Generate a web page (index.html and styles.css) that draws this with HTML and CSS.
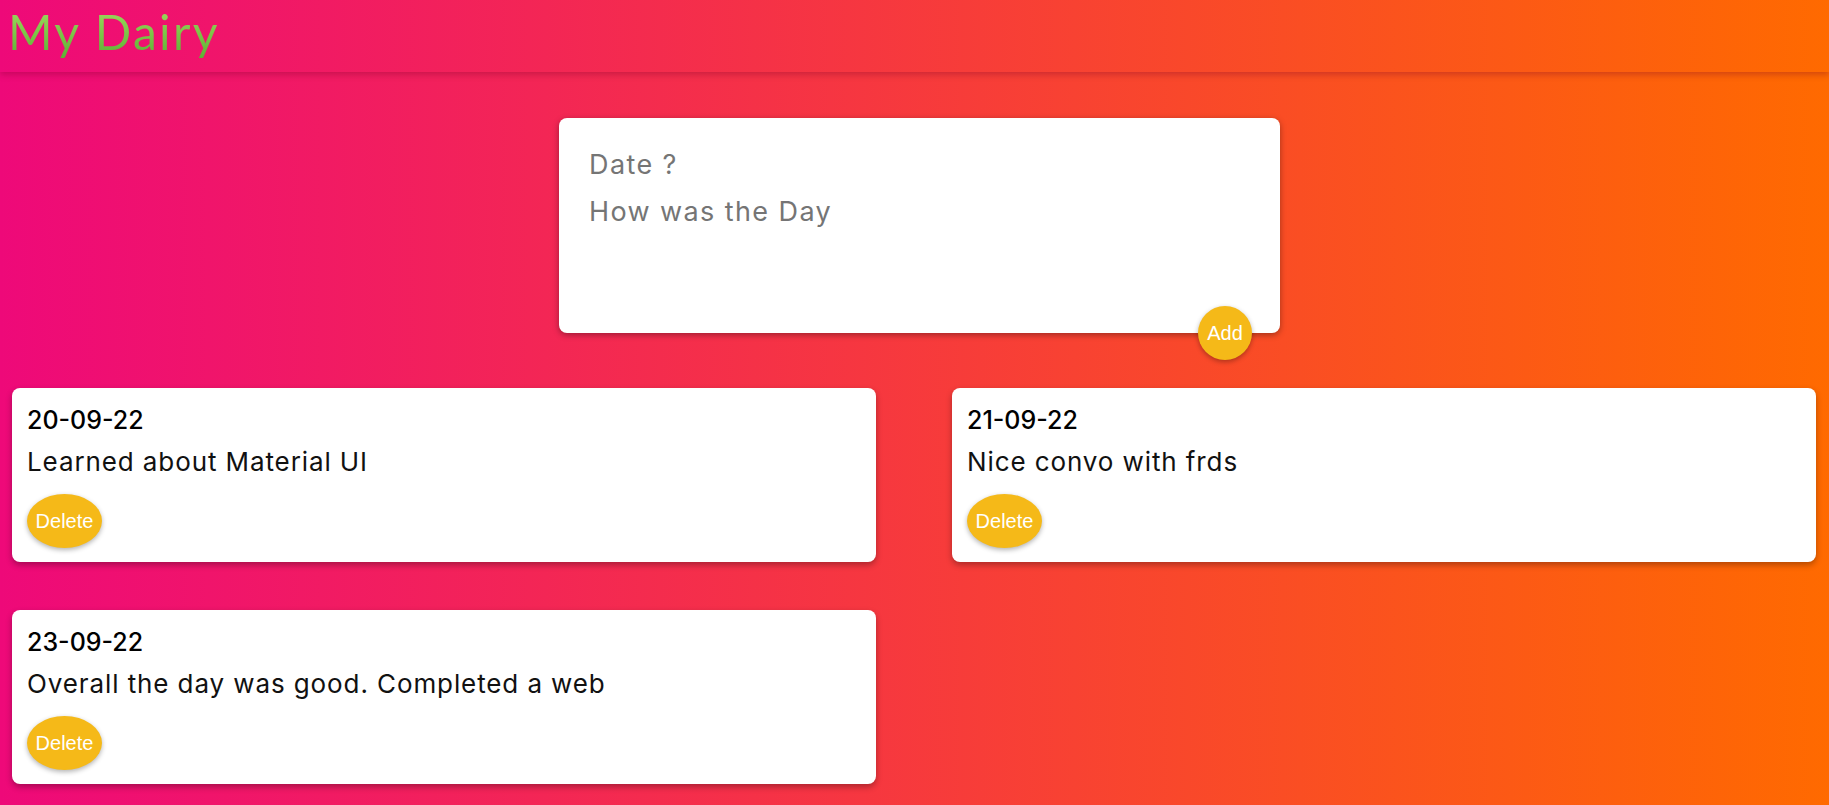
FILE: index.html
```html
<!DOCTYPE html>
<html lang="en">
<head>
<meta charset="utf-8">
<title>My Dairy</title>
<link rel="stylesheet" href="styles.css">
</head>
<body>
<header class="header">
  <h1 class="logo">My Dairy</h1>
</header>
<main class="page">
  <form class="composer">
    <input class="composer-date" type="text" placeholder="Date ?">
    <textarea class="composer-text" rows="3" placeholder="How was the Day"></textarea>
    <button class="add-btn" type="button">Add</button>
  </form>
  <section class="notes">
    <article class="note">
      <h2 class="note-date">20-09-22</h2>
      <p class="note-text">Learned about Material UI</p>
      <button class="delete-btn" type="button">Delete</button>
    </article>
    <article class="note">
      <h2 class="note-date">21-09-22</h2>
      <p class="note-text">Nice convo with frds</p>
      <button class="delete-btn" type="button">Delete</button>
    </article>
    <article class="note">
      <h2 class="note-date">23-09-22</h2>
      <p class="note-text">Overall the day was good. Completed a web</p>
      <button class="delete-btn" type="button">Delete</button>
    </article>
  </section>
</main>
</body>
</html>
```
FILE: styles.css
```css
* { box-sizing: border-box; }
html, body { margin: 0; padding: 0; }
body {
  min-height: 805px;
  background: linear-gradient(to right, #ee0979, #ff6a00);
  font-family: "Inter", "Noto Sans", sans-serif;
}
.header {
  height: 72px;
  padding: 0 8px;
  box-shadow: 0 3px 6px rgba(120, 0, 40, 0.3);
}
.logo {
  margin: 0;
  font-family: "Lato", sans-serif;
  font-weight: 400;
  font-size: 48px;
  letter-spacing: 2.3px;
  line-height: 64px;
  background: linear-gradient(#a8e063, #56ab2f);
  -webkit-background-clip: text;
  background-clip: text;
  color: transparent;
  display: inline-block;
}
.page { padding: 46px 13px 0 12px; }
.composer {
  position: relative;
  width: 721px;
  height: 215px;
  margin: 0 0 0 calc(50% - 355px);
  background: #fff;
  border-radius: 8px;
  box-shadow: 0 2px 6px rgba(0, 0, 0, 0.35);
  padding: 22px 30px;
  display: flex;
  flex-direction: column;
}
.composer-date, .composer-text {
  border: none;
  outline: none;
  font-family: inherit;
  font-size: 27px;
  letter-spacing: 1.4px;
  color: #333;
  padding: 0;
  resize: none;
  background: transparent;
}
.composer-date { height: 38px; margin-top: 5px; }
.composer-text { margin-top: 13px; line-height: 32px; }
.composer-date::placeholder, .composer-text::placeholder { color: #757575; }
.add-btn {
  position: absolute;
  right: 28px;
  bottom: -27px;
  width: 54px;
  height: 54px;
  border-radius: 50%;
  border: none;
  background: #f5b918;
  color: #fff;
  font-family: "Liberation Sans", Arial, sans-serif;
  font-size: 20px;
  box-shadow: 0 2px 5px rgba(0, 0, 0, 0.3);
  padding: 0;
}
.notes {
  margin-top: 55px;
  display: grid;
  grid-template-columns: 1fr 1fr;
  column-gap: 76px;
  row-gap: 48px;
}
.note {
  background: #fff;
  border-radius: 8px;
  box-shadow: 0 3px 6px rgba(0, 0, 0, 0.3);
  padding: 12px 15px 14px;
  height: 174px;
}
.note-date {
  margin: 0;
  font-size: 25px;
  font-weight: 500;
  line-height: 40px;
  color: #000;
}
.note-text {
  margin: 0;
  font-size: 26px;
  letter-spacing: 0.9px;
  line-height: 44px;
  color: #111;
}
.delete-btn {
  margin-top: 10px;
  width: 75px;
  height: 54px;
  border-radius: 50%;
  border: none;
  background: #f5b918;
  color: #fff;
  font-family: "Liberation Sans", Arial, sans-serif;
  font-size: 20px;
  box-shadow: 0 2px 5px rgba(0, 0, 0, 0.3);
  padding: 0;
}
```
